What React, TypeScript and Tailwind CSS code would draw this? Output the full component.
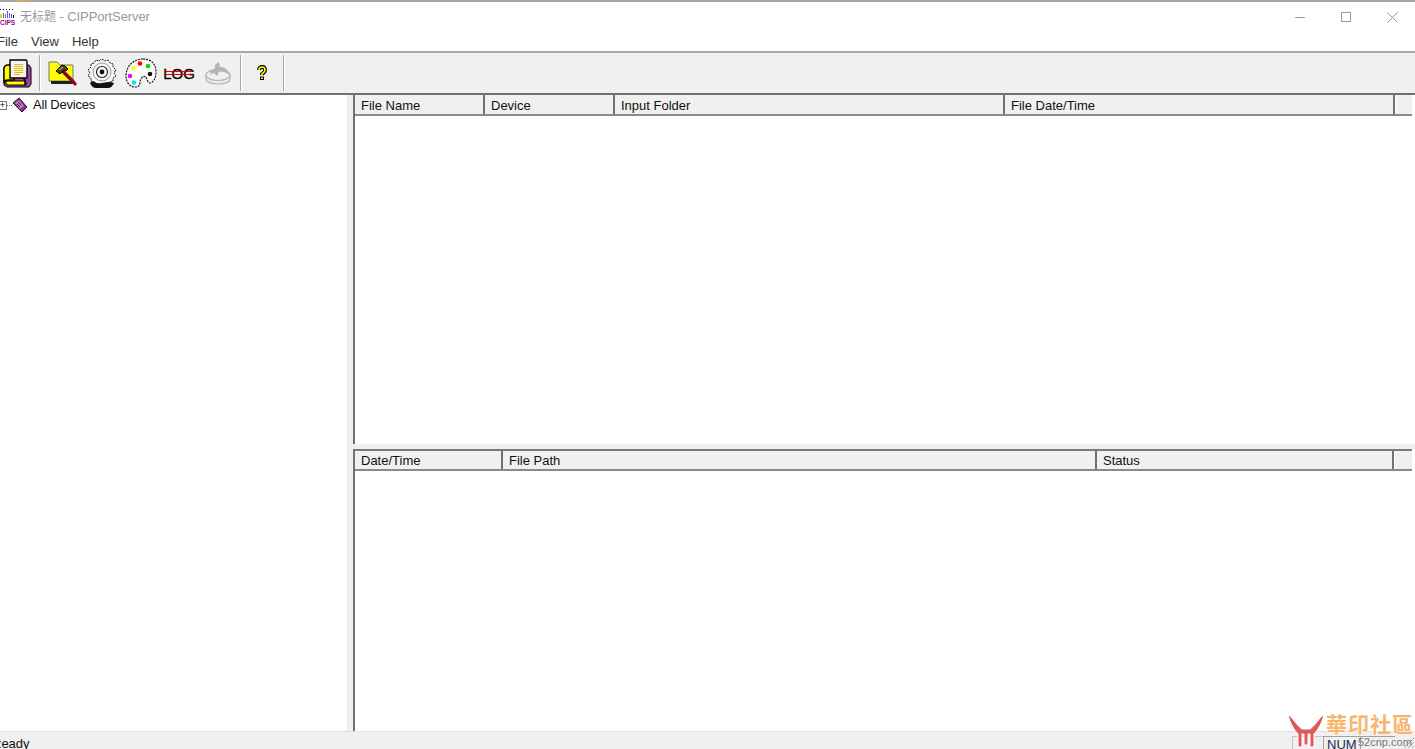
const uiFont = { fontFamily: '"Liberation Sans", "Noto Sans CJK SC", sans-serif' };

function AppIcon() {
  return (
    <svg width="16" height="18" viewBox="0 0 16 18" className="shrink-0">
      <path d="M0 1.5h1M3 1.5h1M6 1.5h1M9 1.5h1M12 1.5h1" stroke="#111" />
      <path d="M1 10V6" stroke="#e8d800" strokeWidth="2" />
      <path d="M3.5 10V5M7.5 10V3M11.5 10V6" stroke="#2a6df0" />
      <path d="M5.5 10V6M9.5 10V5" stroke="#d02fd0" />
      <path d="M13.5 10V7" stroke="#111" />
      <text x="0" y="17" fontSize="6.5" fontWeight="700" fill="#8a0a8a" style={{ fontFamily: '"Liberation Sans", sans-serif' }}>
        CIPS
      </text>
    </svg>
  );
}

function BookIcon() {
  return (
    <svg width="30" height="29" viewBox="0 0 30 29">
      <path d="M2 8h6l2-2h17l2 3v16l-2 3H5l-3-2z" fill="#a040a0" stroke="#000" />
      <path d="M2 10q0-4 4-4h6v15H6q-4 0-4 3z" fill="#ffff00" stroke="#000" strokeWidth="1.4" />
      <path d="M8 1h16l1 1v17H8z" fill="#f4f4f4" stroke="#000" strokeWidth="1.4" />
      <path d="M12 5.5h9M12 7.5h9M12 9.5h9M12 11.5h9M12 13.5h9M12 15.5h6" stroke="#e0c000" />
      <path d="M4 22h20v4H6q-3 0-2-4z" fill="#ffff00" stroke="#000" />
      <path d="M21 19l2 2v5" stroke="#000" strokeWidth="1.5" fill="none" />
    </svg>
  );
}

function FolderHammerIcon() {
  return (
    <svg width="30" height="27" viewBox="0 0 30 27">
      <path d="M1 2h8l3 3h13v16H1z" fill="#ffff00" stroke="#777" />
      <path d="M3 21h23v3H3z" fill="#222" />
      <path d="M12 11l11 11 4 4 2-2-3-4-11-11z" fill="#8b0a1a" />
      <path d="M8 11l6-6 3 1 3 3-2 2-2-1-4 4z" fill="#4a4420" stroke="#000" />
      <path d="M11 10l4-3" stroke="#d8c860" />
    </svg>
  );
}

function DiscGearIcon() {
  return (
    <svg width="30" height="31" viewBox="0 0 30 31">
      <path
        d="M15 1l3 2 3-1 2 3 3 1 0 3 3 3-2 3 2 3-3 2 0 3-3 1-2 3-3-1-3 2-3-2-3 1-2-3-3-1 0-3-3-2 2-3-2-3 3-3 0-3 3-1 2-3 3 1z"
        fill="#f8f8f8"
        stroke="#111"
        strokeDasharray="2 1"
      />
      <circle cx="15" cy="14" r="9" fill="#f4f4f4" stroke="#999" />
      <circle cx="15" cy="14" r="5.5" fill="#fff" stroke="#222" strokeWidth="1.2" />
      <circle cx="15" cy="14" r="2.4" fill="#111" />
      <path d="M3 25q3-3 5-1t7 1 7-1 5 1q-2 5-6 5H9q-4 0-6-5z" fill="#111" />
    </svg>
  );
}

function PaletteIcon() {
  return (
    <svg width="32" height="30" viewBox="0 0 32 30">
      <path
        d="M18 1C9 1 1 8 1 18c0 6 4 11 9 11 4 0 5-2 5-5 0-3 3-7 6-5 1 2 2 6 4 6 4-1 6-6 6-11C31 6 26 1 18 1z"
        fill="#fff"
        stroke="#111"
        strokeWidth="1.2"
        strokeDasharray="2 1"
      />
      <circle cx="15" cy="5.5" r="2.3" fill="#ff0000" />
      <circle cx="23" cy="8" r="2.3" fill="#00e000" />
      <circle cx="8.5" cy="10" r="2.3" fill="#ffff00" />
      <circle cx="25" cy="16" r="2.3" fill="#111" />
      <circle cx="5" cy="18" r="2.3" fill="#ff00ff" />
      <circle cx="9" cy="24.5" r="2.3" fill="#00e8e8" />
    </svg>
  );
}

function LogIcon() {
  return (
    <span className="relative flex h-[16px] w-[30px] items-center justify-center">
      <span className="text-[15px] leading-none text-black" style={{ fontFamily: '"Liberation Sans", sans-serif', WebkitTextStroke: "0.3px #000" }}>
        LOG
      </span>
      <span className="absolute left-0 top-[6px] h-px w-[30px] bg-[#e00000]" />
      <span className="absolute left-0 top-[9px] h-px w-[30px] bg-[#e00000]" />
    </span>
  );
}

function RestoreIcon() {
  return (
    <svg width="26" height="23" viewBox="0 0 26 23">
      <path d="M1 13v4c0 3 5 5 12 5s12-2 12-5v-4" fill="#ececec" stroke="#b4b4b4" strokeWidth="1.2" />
      <ellipse cx="13" cy="13" rx="12" ry="5.5" fill="#f0f0f0" stroke="#b4b4b4" strokeWidth="1.2" />
      <path d="M5 13q0-5 5-7V3L14 0l1 5q8 0 9 8-5-5-10-3l-2 4-3-3q-2 0-4 2z" fill="#b4b4b4" />
    </svg>
  );
}

function HelpIcon() {
  return (
    <svg width="12" height="16" viewBox="0 0 12 16">
      <path d="M3 5q0-3 3-3t3 3q0 2-3 4v1" fill="none" stroke="#000" strokeWidth="3.8" />
      <path d="M3 5q0-3 3-3t3 3q0 2-3 4v1" fill="none" stroke="#ffff00" strokeWidth="1.6" />
      <rect x="4" y="11.5" width="4" height="3.5" fill="#000" />
      <rect x="5" y="12.5" width="2" height="1.5" fill="#ffff00" />
    </svg>
  );
}

function DevicesIcon() {
  return (
    <svg width="16" height="16" viewBox="0 0 16 16">
      <path d="M1 6l6-5 8 9-5 5z" fill="#8a2a8a" stroke="#222" />
      <path d="M3 6l4-3 5 6-4 3z" fill="#c878c8" />
      <path d="M6 5l3 3M5 7l3 3" stroke="#222" />
    </svg>
  );
}

function WindowButtons() {
  return (
    <div className="flex items-center">
      <svg width="11" height="11" viewBox="0 0 11 11" className="mr-[35px]">
        <path d="M0 5.5h10" stroke="#999" />
      </svg>
      <svg width="11" height="11" viewBox="0 0 11 11" className="mr-[35px]">
        <rect x="0.5" y="0.5" width="9" height="9" fill="none" stroke="#999" />
      </svg>
      <svg width="11" height="11" viewBox="0 0 11 11" className="mr-[17px]">
        <path d="M0.5 0.5l10 10M10.5 0.5l-10 10" stroke="#999" />
      </svg>
    </div>
  );
}

type Col = { label: string; width: string };

function ListHeader({ cols, className }: { cols: Col[]; className: string }) {
  return (
    <div className={`flex w-[1057px] shrink-0 border-b-2 border-b-[#8a8a8a] bg-[#f0f0f0] pt-[1px] text-[13px] text-[#111] ${className}`}>
      {cols.map((col) => (
        <div key={col.label} className={`${col.width} -mt-[1px] shrink-0 border-r-2 border-r-[#707070] pl-[6px] pt-[1px]`}>
          {col.label}
        </div>
      ))}
      <div className="flex-1 border-l border-white" />
    </div>
  );
}

const fileCols: Col[] = [
  { label: "File Name", width: "w-[130px]" },
  { label: "Device", width: "w-[130px]" },
  { label: "Input Folder", width: "w-[390px]" },
  { label: "File Date/Time", width: "w-[390px]" },
];

const logCols: Col[] = [
  { label: "Date/Time", width: "w-[148px]" },
  { label: "File Path", width: "w-[594px]" },
  { label: "Status", width: "w-[297px]" },
];

function Separator() {
  return <div className="h-[36px] w-[2px] border-r border-r-white bg-[#a8a8a8]" />;
}

export default function App() {
  return (
    <div className="relative flex h-[749px] w-[1415px] flex-col overflow-hidden bg-white" style={uiFont}>
      {/* top edge of the window */}
      <div className="flex h-[2px] shrink-0 bg-[#a6a6a6]">
        <div className="ml-[16px] h-[1px] w-[13px] bg-[#d8b040]" />
      </div>

      <div className="flex h-[30px] shrink-0 items-center justify-between">
        <div className="flex items-center gap-[4px]">
          <AppIcon />
          <span className="text-[13px] tracking-[-0.1px] text-[#999]">
            <span className="text-[12px] tracking-normal">无标题</span> - CIPPortServer
          </span>
        </div>
        <WindowButtons />
      </div>

      <div className="-ml-[3px] flex h-[19px] shrink-0 items-center gap-[13px] text-[13px] text-[#333]">
        <span>File</span>
        <span>View</span>
        <span>Help</span>
      </div>

      <div className="h-[2px] shrink-0 bg-[#a8a8a8]" />

      <div className="flex h-[40px] shrink-0 items-center bg-[#f0f0f0] pl-[2px]">
        <BookIcon />
        <div className="ml-[7px]"><Separator /></div>
        <div className="ml-[7px]"><FolderHammerIcon /></div>
        <div className="ml-[9px]"><DiscGearIcon /></div>
        <div className="ml-[8px]"><PaletteIcon /></div>
        <div className="ml-[7px]"><LogIcon /></div>
        <div className="ml-[11px]"><RestoreIcon /></div>
        <div className="ml-[9px]"><Separator /></div>
        <div className="ml-[14px]"><HelpIcon /></div>
        <div className="ml-[15px]"><Separator /></div>
      </div>

      <div className="h-[2px] shrink-0 bg-[#707070]" />

      <div className="flex min-h-0 flex-1">
        <div className="w-[348px] shrink-0 border-r border-r-[#ececec] bg-white">
          <div className="flex h-[20px] items-center">
            <span className="-ml-[2px] flex h-[9px] w-[9px] items-center justify-center border border-[#777] text-[9px] leading-none text-black">+</span>
            <span className="w-[5px] border-t border-dotted border-[#777]" />
            <DevicesIcon />
            <span className="ml-[5px] text-[13px] tracking-[-0.2px] text-[#111]">All Devices</span>
          </div>
        </div>

        <div className="w-[5px] shrink-0 bg-[#f0f0f0]" />

        <div className="flex min-w-0 flex-1 flex-col">
          <div className="flex h-[349px] shrink-0 flex-col border-l-2 border-l-[#707070]">
            <ListHeader cols={fileCols} className="h-[21px] leading-[20px]" />
          </div>
          <div className="h-[5px] shrink-0 bg-[#f0f0f0]" />
          <div className="flex min-h-0 flex-1 flex-col border-l-2 border-l-[#707070]">
            <ListHeader cols={logCols} className="h-[22px] border-t-2 border-t-[#7a7a7a] leading-[18px]" />
          </div>
        </div>
      </div>

      <div className="relative flex h-[18px] shrink-0 border-t border-t-[#e0e0e0] bg-[#f0f0f0] text-[13px] text-[#111]">
        <span className="-ml-[8px] leading-[24px]">Ready</span>
        <div className="absolute left-[1292px] top-[4px] flex h-[16px]">
          <div className="h-[16px] w-[31px] border-l border-t border-[#c4c4c4]" />
          <div className="h-[16px] w-[37px] border-l border-t border-[#a0a0a0] pl-[3px] text-[13px] leading-[15px] text-[#1a2a4a]">NUM</div>
          <div className="h-[16px] w-[35px] border-l border-t border-[#a0a0a0]" />
        </div>
        <svg width="12" height="12" viewBox="0 0 12 12" className="absolute bottom-0 right-0">
          <path d="M11 1L1 11M11 5l-6 6M11 9l-2 2" stroke="#a8a8a8" />
        </svg>
      </div>

      {/* forum watermark */}
      <div className="pointer-events-none absolute left-[1286px] top-[713px] h-[36px] w-[129px]">
        <svg width="40" height="36" viewBox="0 0 40 36" className="absolute left-0 top-0">
          <path d="M2 2c4 1 8 10 14 14h8c6-4 10-13 14-14-2 8-6 15-10 19v13h-4V21h-2v11h-4V21h-2v13h-4V21C8 17 4 10 2 2z" fill="#df5b5b" stroke="#fff" strokeWidth="1" />
        </svg>
        <span className="absolute left-[40px] top-[-4px] whitespace-nowrap text-[21px] font-bold leading-[28px] tracking-[1px] text-[#f8b56e]" style={{ fontFamily: '"Noto Sans CJK TC", sans-serif', textShadow: "0 0 2px #fff" }}>華印社區</span>
        <span className="absolute left-[72px] top-[22px] whitespace-nowrap text-[11px] leading-[14px] text-[#777]">52cnp.com</span>
      </div>
    </div>
  );
}
